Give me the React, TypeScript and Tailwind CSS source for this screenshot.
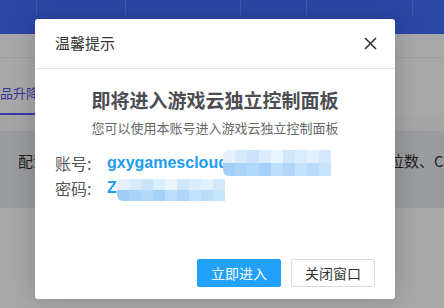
import React from "react";

const topMosaic = [
  "bg-[#e4f1fd]", "bg-[#d6eafc]", "bg-[#cbe4fb]", "bg-[#dcedfd]", "bg-[#e9f4fe]",
  "bg-[#cfe6fb]", "bg-[#d9ecfc]", "bg-[#e3f1fd]", "bg-[#d3e8fb]",
];
const bottomMosaic = [
  "bg-[#9fcff8]", "bg-[#a9d4f8]", "bg-[#b3d9f9]", "bg-[#a4d1f8]", "bg-[#bcdefa]",
  "bg-[#afd6f9]", "bg-[#c2e1fa]", "bg-[#b8dcf9]", "bg-[#c8e4fb]",
];

const Mosaic: React.FC<{ className: string; rowH: string }> = ({ className, rowH }) => (
  <div className={`flex flex-col overflow-hidden rounded-l-[6px] ${className}`}>
    <div className={`flex ${rowH}`}>
      {topMosaic.map((c, i) => (
        <div key={i} className={`w-[12px] ${c}`} />
      ))}
    </div>
    <div className={`flex ${rowH}`}>
      {bottomMosaic.map((c, i) => (
        <div key={i} className={`w-[12px] ${c}`} />
      ))}
    </div>
  </div>
);

export default function App() {
  return (
    <div className="relative h-[308px] w-[444px] overflow-hidden bg-white font-['Noto_Sans_CJK_SC',sans-serif]">
      {/* page under the mask */}
      <div className="flex h-[34px] items-start bg-[#416cfa]">
        <div className="h-[15px] w-[37px] border-r border-white/20" />
        <div className="h-[15px] w-[89px] border-r border-white/20" />
        <div className="h-[15px] w-[115px] border-r border-white/20" />
        <div className="h-[15px] w-[66px] border-r border-white/20" />
        <div className="h-[15px] w-[106px] border-r border-white/20" />
      </div>
      <div className="h-[24px] border-b border-[#f0f0f0] bg-white" />
      <div className="flex h-[57px] items-end bg-white">
        <div className="-ml-[13px] border-b-2 border-[#5a5aff] pb-[11px] text-[13px] leading-[18px] whitespace-nowrap text-[#5656e8]">
          产品升降配
        </div>
      </div>
      <div className="h-[16px] bg-[#fafafa]" />
      <div className="flex h-[77px] justify-between bg-[#eaebf2] pt-[21px] pl-[18px] text-[15px] leading-[18px] whitespace-nowrap text-[#333]">
        <span>配置</span>
        <span className="-mr-[20px]">操作系统位数、CPU</span>
      </div>

      {/* mask */}
      <div className="absolute inset-0 bg-black/[0.34]" />

      {/* dialog */}
      <div className="absolute top-[19px] left-[35px] flex h-[280px] w-[360px] flex-col rounded-[3px] bg-white shadow-[0_0_24px_rgba(0,0,0,0.2)]">
        <div className="flex h-[50px] items-center justify-between border-b border-[#e8e8e8] pr-[18px] pl-[20px]">
          <span className="text-[15px] text-[#333]">温馨提示</span>
          <svg width="13" height="13" viewBox="0 0 13 13" className="text-[#333]">
            <path d="M1 1L12 12M12 1L1 12" stroke="currentColor" strokeWidth="1.6" />
          </svg>
        </div>

        <div className="flex flex-1 flex-col px-[20px] pt-[18px]">
          <h1 className="text-center text-[19px] leading-[26px] font-bold text-[#4b4d52]">
            即将进入游戏云独立控制面板
          </h1>
          <p className="mt-[5px] text-center text-[13px] leading-[20px] text-[#666]">
            您可以使用本账号进入游戏云独立控制面板
          </p>

          <div className="mt-[12px] flex h-[25px] items-center text-[16px]">
            <span className="w-[52px] text-[#555]">账号:</span>
            <span className="font-['Liberation_Sans',sans-serif] font-bold text-[#1e9cf2]">gxygamescloud</span>
            <Mosaic className="-ml-[5px]" rowH="h-[13px]" />
          </div>
          <div className="flex h-[25px] items-center text-[16px]">
            <span className="w-[52px] text-[#555]">密码:</span>
            <span className="font-['Liberation_Sans',sans-serif] font-bold text-[#1e9cf2]">Z</span>
            <Mosaic className="mt-[4px]" rowH="h-[11px]" />
          </div>

          <div className="mt-auto mb-[12px] flex justify-end gap-[10px]">
            <button className="h-[28px] w-[84px] rounded-[2px] bg-[#22a1fb] text-[14px] text-white">
              立即进入
            </button>
            <button className="h-[28px] w-[84px] rounded-[2px] border border-[#dcdcdc] bg-white text-[14px] text-[#333]">
              关闭窗口
            </button>
          </div>
        </div>
      </div>
    </div>
  );
}
